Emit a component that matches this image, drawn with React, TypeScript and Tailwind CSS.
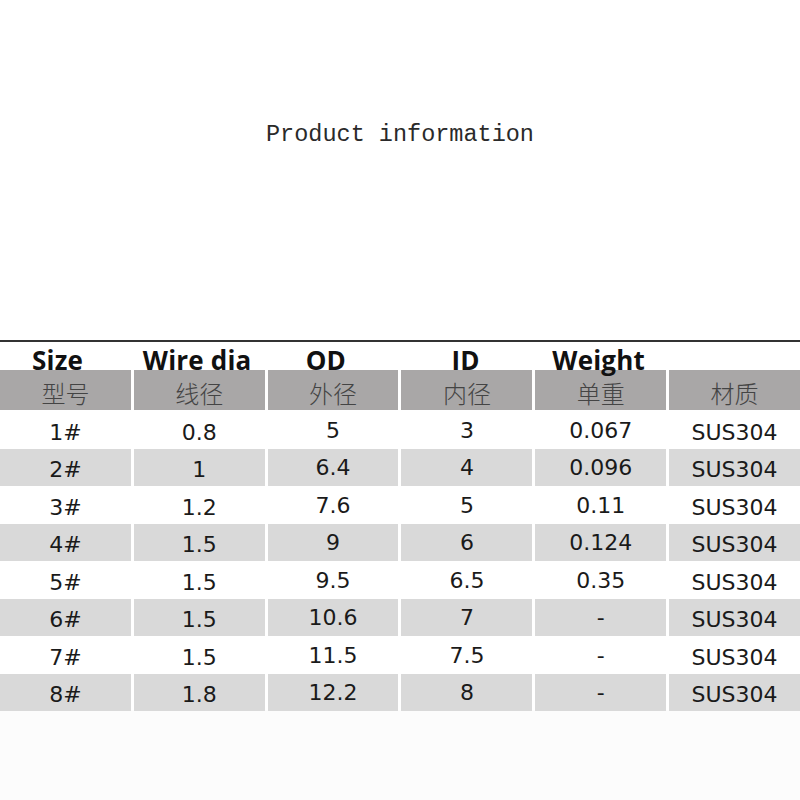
import React from 'react'

const heads = [
  { label: 'Size', pad: 'pl-[32px]' },
  { label: 'Wire dia', pad: 'pl-[9px]' },
  { label: 'OD', pad: 'pl-[38px]' },
  { label: 'ID', pad: 'pl-[50px]' },
  { label: 'Weight', pad: 'pl-[17px]' },
  { label: '', pad: '' },
]

const cn = ['型号', '线径', '外径', '内径', '单重', '材质']

const rows = [
  ['1#', '0.8', '5', '3', '0.067', 'SUS304'],
  ['2#', '1', '6.4', '4', '0.096', 'SUS304'],
  ['3#', '1.2', '7.6', '5', '0.11', 'SUS304'],
  ['4#', '1.5', '9', '6', '0.124', 'SUS304'],
  ['5#', '1.5', '9.5', '6.5', '0.35', 'SUS304'],
  ['6#', '1.5', '10.6', '7', '-', 'SUS304'],
  ['7#', '1.5', '11.5', '7.5', '-', 'SUS304'],
  ['8#', '1.8', '12.2', '8', '-', 'SUS304'],
]

// cols 0, 1 and 5 sit a touch lower in the picture
const lower = [true, true, false, false, false, true]

export default function App() {
  return (
    <div className="w-[800px] h-[800px] bg-white overflow-hidden">
      <div className="h-[340px] pt-[120px] text-center">
        <h1 className="font-['Liberation_Mono',monospace] text-[23.5px] leading-[30px] text-[#2a2a2a]">
          Product information
        </h1>
      </div>

      <div className="h-[2px] bg-[#333]" />

      {/* english titles hang over the grey row, so they sit on top */}
      <div className="relative z-10 grid grid-cols-6 gap-x-[3px] h-[28px] items-end">
        {heads.map(({ label, pad }, i) => (
          <div
            key={i}
            className={`${pad} -mb-[1px] font-['Open_Sans',sans-serif] font-bold text-[26px] leading-[22px] tracking-[0.2px] text-[#111] whitespace-nowrap`}
          >
            {label}
          </div>
        ))}
      </div>

      <div className="grid grid-cols-6 gap-x-[3px] h-[40px]">
        {cn.map(t => (
          <div
            key={t}
            className="bg-[#a9a7a7] flex items-center justify-center pt-[5px] font-['Noto_Sans_CJK_SC',sans-serif] font-light text-[24px] leading-[30px] text-[#444]"
          >
            {t}
          </div>
        ))}
      </div>

      {rows.map((row, r) => (
        <div key={r} className="grid grid-cols-6 gap-x-[3px] h-[37.5px] pt-[1.5px]">
          {row.map((v, c) => (
            <div
              key={c}
              className={`${r % 2 === 1 ? 'bg-[#d9d9d9]' : ''} flex items-center justify-center ${
                lower[c] ? 'pt-[4px]' : ''
              } font-['DejaVu_Sans',sans-serif] text-[22px] text-[#1a1a1a]`}
            >
              {v}
            </div>
          ))}
        </div>
      ))}

      <div className="h-[90px] bg-[#fcfcfc]" />
    </div>
  )
}
